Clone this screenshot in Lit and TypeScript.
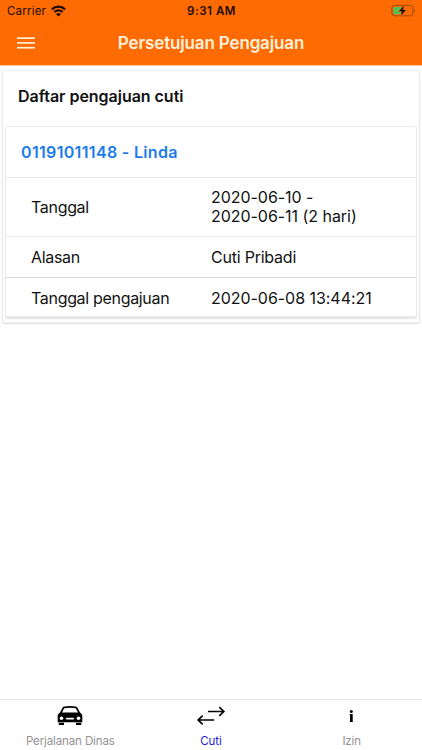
import { LitElement, html, css, svg } from "lit";
import { customElement, property } from "lit/decorators.js";

const wifiIcon = svg`
  <path d="M0.9 4.4 A9.4 9.4 0 0 1 14.1 4.4" stroke-width="2.3" />
  <path d="M3.4 7.1 A5.8 5.8 0 0 1 11.6 7.1" stroke-width="2.1" />
  <path d="M7.5 11.6 L5.1 9.2 A3.4 3.4 0 0 1 9.9 9.2 Z" fill="#1c0c00" stroke="none" />`;

@customElement("status-bar")
class StatusBar extends LitElement {
  static styles = css`
    :host {
      display: grid;
      grid-template-columns: 1fr auto 1fr;
      align-items: center;
      height: 22px;
      padding: 0 6px 0 7px;
      color: #1c0c00;
      font-size: 11.5px;
    }
    .left { display: flex; align-items: center; gap: 5px; letter-spacing: 0.2px; }
    .time { font-weight: 600; letter-spacing: 0.55px; }
    .battery { justify-self: end; }
    svg { display: block; }
  `;
  render() {
    return html`
      <div class="left">
        <span>Carrier</span>
        <svg width="15" height="12" viewBox="0 0 15 12" fill="none" stroke="#1c0c00">${wifiIcon}</svg>
      </div>
      <span class="time">9:31 AM</span>
      <svg class="battery" width="25" height="14" viewBox="0 0 25 14">
        <rect x="0.9" y="1.4" width="21" height="10.4" rx="2.6" fill="none" stroke="#a04a0c" stroke-width="1" />
        <path d="M23.2 4.8 Q25 6.6 23.2 8.4 Z" fill="#a04a0c" />
        <rect x="2.4" y="2.9" width="8.2" height="7.4" rx="1.2" fill="#4fc45a" />
        <path d="M13 1.6 L8 7.3 H10.9 L9.8 11.6 L15 5.9 H12 Z" fill="#1c0c00" stroke="#fd6b02" stroke-width="1.2" paint-order="stroke" />
      </svg>
    `;
  }
}

@customElement("nav-bar")
class NavBar extends LitElement {
  static styles = css`
    :host {
      display: grid;
      grid-template-columns: 1fr auto 1fr;
      align-items: center;
      height: 44px;
      padding: 0 17px 1px;
      border-bottom: 1px solid #ffc49a;
      box-sizing: border-box;
      color: #fff1dc;
    }
    .title { font-size: 17px; font-weight: 600; letter-spacing: -0.15px; }
    svg { display: block; }
  `;
  @property() heading = "";
  render() {
    return html`
      <svg width="18" height="12" viewBox="0 0 18 12" fill="#fff1dc">
        <rect y="0.3" width="18" height="1.7" />
        <rect y="5.1" width="18" height="1.7" />
        <rect y="9.9" width="18" height="1.7" />
      </svg>
      <span class="title">${this.heading}</span>
    `;
  }
}

@customElement("leave-card")
class LeaveCard extends LitElement {
  static styles = css`
    :host {
      display: block;
      border: 1px solid #ececec;
      border-radius: 2px;
      background: #fff;
      box-shadow: 0 2px 2px rgba(0, 0, 0, 0.11);
    }
    .name {
      display: flex;
      align-items: center;
      height: 50px;
      padding-left: 15px;
      color: #1c7bea;
      font-size: 16px;
      font-weight: 600;
      letter-spacing: 0.33px;
    }
    .row {
      display: grid;
      grid-template-columns: 180px 1fr;
      align-items: center;
      height: 40px;
      box-sizing: border-box;
      padding-left: 25px;
      border-top: 1px solid #ebebeb;
      font-size: 16px;
      line-height: 19px;
    }
    .row.tall { height: 59px; }
    .row.middle { height: 41px; }
    .row.last { height: 39px; padding-top: 2px; border-top-color: #d8d8d8; }
    .key { letter-spacing: -0.32px; }
    .value { white-space: pre-line; letter-spacing: -0.04px; }
    .words { letter-spacing: -0.22px; }
  `;
  render() {
    return html`
      <div class="name">01191011148 - Linda</div>
      <div class="row tall"><span class="key">Tanggal</span><span class="value">2020-06-10 -${"\n"}2020-06-11 (2 hari)</span></div>
      <div class="row middle"><span class="key">Alasan</span><span class="value words">Cuti Pribadi</span></div>
      <div class="row last"><span class="key">Tanggal pengajuan</span><span class="value">2020-06-08 13:44:21</span></div>
    `;
  }
}

@customElement("tab-bar")
class TabBar extends LitElement {
  static styles = css`
    :host {
      display: grid;
      grid-template-columns: repeat(3, 1fr);
      height: 51px;
      box-sizing: border-box;
      border-top: 1px solid #e6e6e6;
      background: #fff;
      color: #929292;
      font-size: 11.5px;
    }
    .tab { display: flex; flex-direction: column; align-items: center; }
    .icon { display: block; height: 33px; width: 30px; }
    .label { line-height: 17px; letter-spacing: -0.12px; }
    .active { color: #2519cf; }
  `;
  render() {
    return html`
      <div class="tab">
        <svg class="icon" viewBox="0 0 30 33">
          <path fill-rule="evenodd" d="M7.6 7.6 Q8.2 6.5 9.6 6.4 Q15 5.8 20.4 6.4 Q21.8 6.5 22.4 7.6 L25 12.6 L26.6 14 Q27.3 14.7 27.3 15.8 V22.2 H2.7 V15.8 Q2.7 14.7 3.4 14 L5 12.6 Z M9.2 8.2 L7 12.4 H23 L20.8 8.2 Q15 7.4 9.2 8.2 Z" />
          <path d="M3.7 22.8 H9 V25 H4.4 Q3.7 25 3.7 24.3 Z M21 22.8 H26.3 V24.3 Q26.3 25 25.6 25 H21 Z" />
          <circle cx="6.5" cy="18.3" r="1.8" fill="#fff" />
          <circle cx="23.5" cy="18.3" r="1.8" fill="#fff" />
          <rect x="10.8" y="17.7" width="8.4" height="1.7" rx="0.8" fill="#fff" />
        </svg>
        <span class="label">Perjalanan Dinas</span>
      </div>
      <div class="tab active">
        <svg class="icon" viewBox="0 0 30 33" fill="none" stroke="#000" stroke-width="1.7">
          <path d="M12 11.5 H27.6 M23.3 7.2 L27.8 11.5 L23.3 15.8" />
          <path d="M18.2 20 H2.4 M6.7 15.7 L2.2 20 L6.7 24.3" />
        </svg>
        <span class="label">Cuti</span>
      </div>
      <div class="tab">
        <svg class="icon" viewBox="0 0 30 33">
          <circle cx="14.3" cy="11.4" r="1.5" />
          <path d="M12.6 14 H15.7 V21.4 H16 V22 H12.6 V21.4 H13 V14.6 H12.6 Z" />
        </svg>
        <span class="label">Izin</span>
      </div>
    `;
  }
}

@customElement("app-root")
class AppRoot extends LitElement {
  static styles = css`
    :host {
      display: flex;
      flex-direction: column;
      height: 750px;
      background: #fff;
      color: #111;
      font-family: Inter, "Liberation Sans", sans-serif;
    }
    .top { background: #fd6b02; }
    .content { flex: 1; padding: 4px 2px 0; }
    .panel {
      box-sizing: border-box;
      height: 253px;
      padding: 0 2px;
      border: 1px solid #ececec;
      border-radius: 2px;
      box-shadow: 0 1px 2px rgba(0, 0, 0, 0.13);
    }
    .heading {
      display: flex;
      align-items: center;
      height: 49px;
      padding: 0 13px 6px;
      font-size: 16px;
      font-weight: 600;
      letter-spacing: -0.03px;
    }
  `;
  render() {
    return html`
      <div class="top">
        <status-bar></status-bar>
        <nav-bar heading="Persetujuan Pengajuan"></nav-bar>
      </div>
      <div class="content">
        <div class="panel">
          <div class="heading">Daftar pengajuan cuti</div>
          <leave-card></leave-card>
        </div>
      </div>
      <tab-bar></tab-bar>
    `;
  }
}
